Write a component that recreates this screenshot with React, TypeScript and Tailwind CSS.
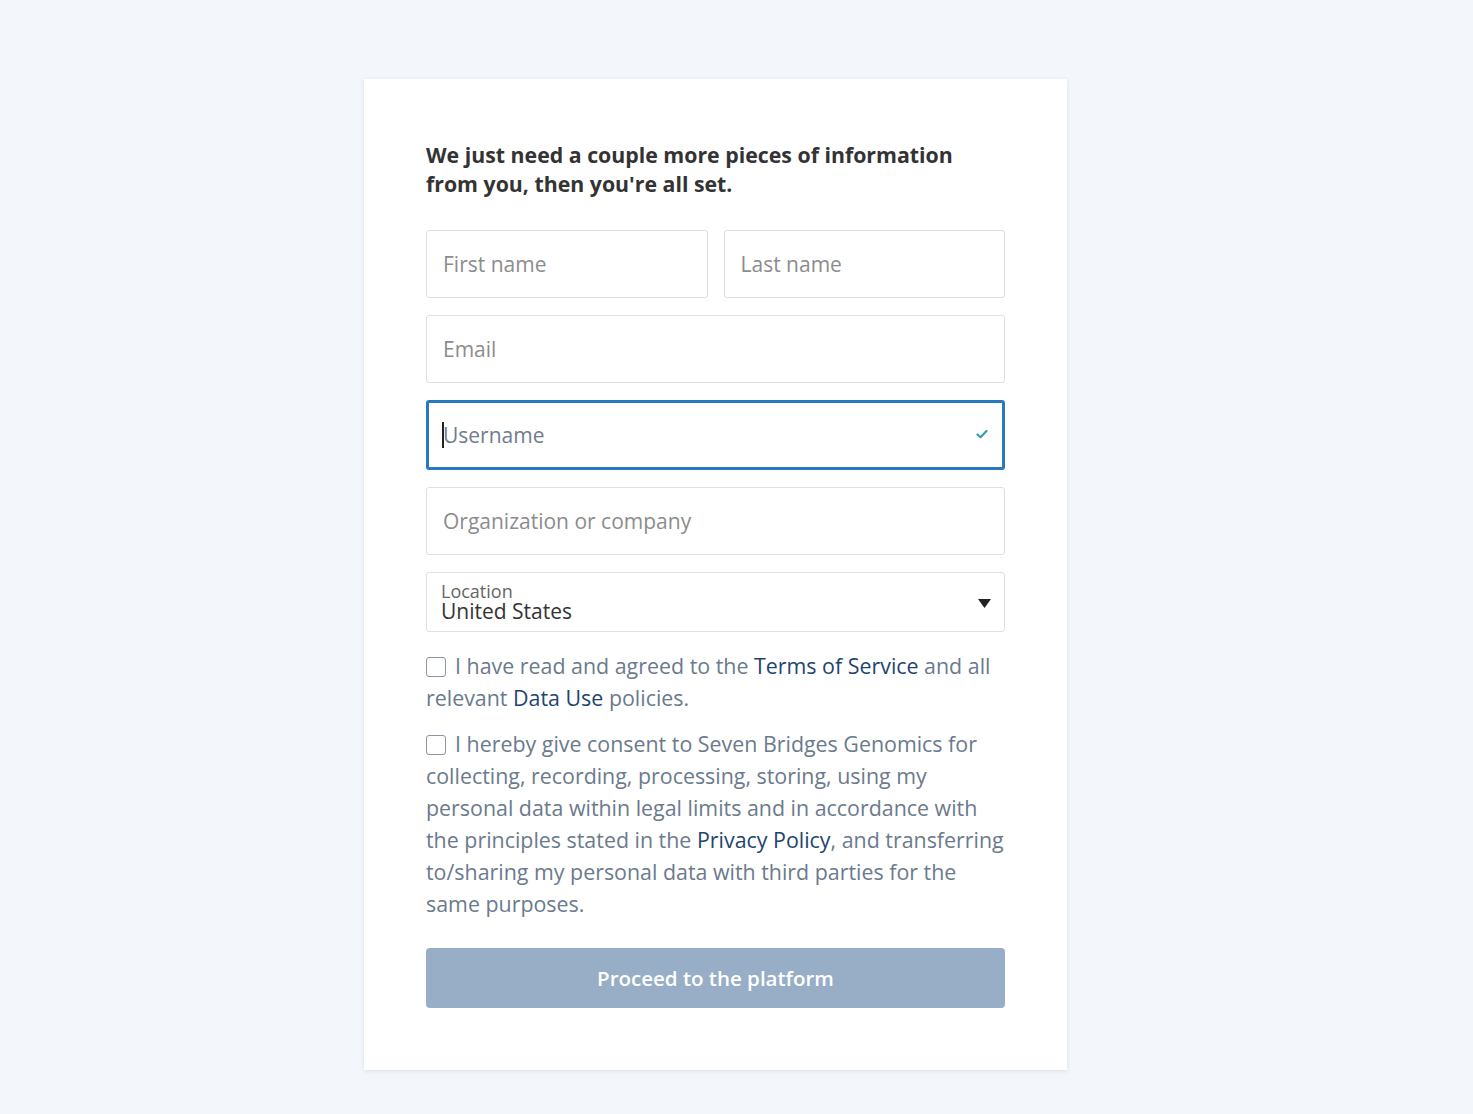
import { useState } from "react";

const FONT = { fontFamily: '"Open Sans", "Noto Sans", sans-serif' };

function TextField({
  placeholder,
  className = "",
}: {
  placeholder: string;
  className?: string;
}) {
  return (
    <input
      type="text"
      placeholder={placeholder}
      className={`h-[68px] w-full rounded-[3px] border border-[#dcdfe3] bg-white px-[16px] text-[21px] text-[#333] outline-none placeholder:text-[#8c8c8c] ${className}`}
    />
  );
}

export default function App() {
  const [terms, setTerms] = useState(false);
  const [consent, setConsent] = useState(false);

  return (
    <div
      className="flex min-h-[1114px] w-full justify-center bg-[#f3f7fc] pr-[42px] pt-[79px]"
      style={FONT}
    >
      <div className="h-[991px] w-[703px] bg-white px-[62px] pt-[61px] shadow-[0_1px_4px_rgba(30,50,80,0.12)]">
        {/* Header */}
        <p className="text-[21.3px] font-bold leading-[29px] text-[#333]">
          We just need a couple more pieces of information
          <br />
          from you, then you're all set.
        </p>

        {/* Fields */}
        <div className="mt-[32px] flex flex-col gap-[17px]">
          <div className="flex gap-[16px]">
            <TextField placeholder="First name" />
            <TextField placeholder="Last name" />
          </div>
          <TextField placeholder="Email" />
          <div className="relative">
            <input
              type="text"
              placeholder="Username"
              className="h-[70px] w-full rounded-[3px] border-[3px] border-[#2978c2] bg-white px-[14px] text-[21px] text-[#333] outline-none placeholder:text-[#6f7d8c]"
            />
            <span className="absolute left-[16px] top-[22px] h-[26px] w-[2px] bg-[#222]" />
            <svg
              className="absolute right-[17px] top-[28px] h-[12px] w-[12px]"
              viewBox="0 0 12 12"
              fill="none"
            >
              <path
                d="M1.5 6.5 L4.5 9.2 L10.5 3"
                stroke="#3a9bb0"
                strokeWidth="2.2"
                strokeLinecap="round"
                strokeLinejoin="round"
              />
            </svg>
          </div>
          <TextField placeholder="Organization or company" />

          {/* Location select */}
          <div className="relative flex h-[60px] w-full flex-col justify-center rounded-[3px] border border-[#dcdfe3] bg-white px-[14px]">
            <span className="text-[18px] leading-[18px] text-[#666]">Location</span>
            <span className="text-[21px] leading-[22px] text-[#333]">United States</span>
            <svg
              className="absolute right-[13px] top-[26px] h-[9px] w-[13px]"
              viewBox="0 0 13 9"
            >
              <path d="M0 0 H13 L6.5 9 Z" fill="#222" />
            </svg>
          </div>
        </div>

        {/* Agreements */}
        <div className="mt-[18px] text-[21.4px] leading-[32px] text-[#6b7a8c]">
          <label className="block">
            <input
              type="checkbox"
              checked={terms}
              onChange={(e) => setTerms(e.target.checked)}
              className="mr-[9px] inline-block h-[20px] w-[20px] translate-y-[3px] appearance-none rounded-[3px] border border-[#8d97a3] bg-white align-baseline"
            />
            I have read and agreed to the{" "}
            <a className="text-[#1f4470]">Terms of Service</a> and all relevant{" "}
            <a className="text-[#1f4470]">Data Use</a> policies.
          </label>
          <label className="mt-[14px] block">
            <input
              type="checkbox"
              checked={consent}
              onChange={(e) => setConsent(e.target.checked)}
              className="mr-[9px] inline-block h-[20px] w-[20px] translate-y-[3px] appearance-none rounded-[3px] border border-[#8d97a3] bg-white align-baseline"
            />
            I hereby give consent to Seven Bridges Genomics for collecting,
            recording, processing, storing, using my personal data within legal
            limits and in accordance with the principles stated in the{" "}
            <a className="text-[#1f4470]">Privacy Policy</a>, and transferring
            to/sharing my personal data with third parties for the same
            purposes.
          </label>
        </div>

        {/* Submit */}
        <button
          type="button"
          disabled
          className="mt-[28px] h-[60px] w-full rounded-[4px] bg-[#97aec6] text-[20.5px] font-semibold text-white"
        >
          Proceed to the platform
        </button>
      </div>
    </div>
  );
}
